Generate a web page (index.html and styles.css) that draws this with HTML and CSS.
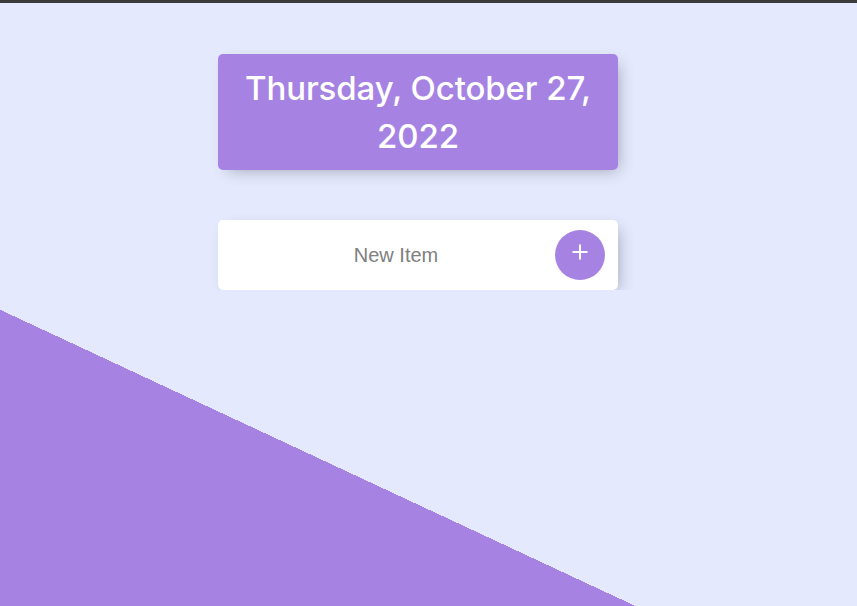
FILE: index.html
```html
<!DOCTYPE html>
<html lang="en">
<head>
<meta charset="utf-8">
<title>To Do List</title>
<link rel="stylesheet" href="styles.css">
</head>
<body>
<div class="topbar"></div>
<main class="page">
  <div class="box heading">
    <h1 class="title">Thursday, October 27, 2022</h1>
  </div>
  <div class="box">
    <form class="new-item" onsubmit="return false">
      <input class="item-input" type="text" name="newItem" placeholder="New Item" autocomplete="off">
      <button class="add-btn" type="submit" aria-label="Add">
        <svg width="16" height="16" viewBox="0 0 16 16" aria-hidden="true"><path d="M8 0.5V15.5M0.5 8H15.5" stroke="#fff" stroke-width="2" fill="none"/></svg>
      </button>
    </form>
  </div>
</main>
</body>
</html>
```

FILE: styles.css
```css
html {
  height: 100%;
  background-color: #E4E9FD;
  background-image: linear-gradient(25deg, #A683E3 50%, #E4E9FD 50%);
  background-size: 100% 1019px;
  background-repeat: no-repeat;
}

body {
  margin: 0;
  font-family: "Liberation Sans", Arial, sans-serif;
}

.topbar {
  height: 3px;
  background: #3b3b3b;
}

.page {
  display: flex;
  flex-direction: column;
  align-items: center;
  gap: 50px;
  padding-top: 51px;
  padding-right: 21px;
}

.box {
  width: 400px;
  background: #fff;
  border-radius: 5px;
  box-shadow: 5px 5px 15px -5px rgba(0, 0, 0, 0.3);
}

.heading {
  background-color: #A683E3;
  text-align: center;
}

.title {
  margin: 0;
  padding: 10px;
  color: #fff;
  font-family: Inter, "Noto Sans", sans-serif;
  font-weight: 500;
  font-size: 33px;
  line-height: 48px;
  letter-spacing: -0.1px;
}

.new-item {
  display: flex;
  align-items: center;
  height: 70px;
  padding-left: 20px;
}

.item-input {
  width: 316px;
  height: 60px;
  padding: 0;
  border: none;
  background: transparent;
  text-align: center;
  font-family: "Liberation Sans", Arial, sans-serif;
  font-size: 20px;
  color: #00204a;
  outline: none;
}

.item-input::placeholder {
  color: grey;
  opacity: 1;
}

.add-btn {
  margin-left: 1px;
  width: 50px;
  height: 50px;
  border: 0;
  border-radius: 50%;
  background-color: #A683E3;
  padding: 0 0 6px 0;
  display: flex;
  align-items: center;
  justify-content: center;
}

.add-btn svg {
  display: block;
}
```
